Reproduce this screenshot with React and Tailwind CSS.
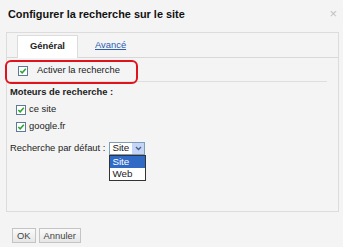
import React from 'react';

const Check = () => (
  <svg width="10" height="10" viewBox="0 0 10 10" className="shrink-0">
    <rect x="0.5" y="0.5" width="9" height="9" fill="#fff" stroke="#5f7a96" />
    <path d="M2.3 5 L4.2 6.9 L7.8 2.8" fill="none" stroke="#2fa52f" strokeWidth="1.6" />
  </svg>
);

export default function App() {
  return (
    <div className="w-[343px] h-[247px] bg-[#f4f4f4] relative text-[#222] font-['Liberation_Sans',Arial,sans-serif] text-[9.4px] overflow-hidden">
      {/* Header */}
      <div className="h-[32px] flex items-start pt-[8px] pl-[8px] pr-[6px] justify-between">
        <span className="text-[10.9px] font-bold leading-[13px] text-[#111]">Configurer la recherche sur le site</span>
        <span className="text-[13px] leading-[12px] text-[#c2c2c2]">×</span>
      </div>

      {/* Panel */}
      <div className="relative ml-[6px] w-[333px] h-[180px] border border-[#dcdcdc] bg-[#f4f4f4]">
        {/* Tabs */}
        <div className="h-[25px] flex items-end border-b border-[#d8d8d8] pl-[10px]">
          <div className="h-[23px] w-[61px] bg-white border border-b-0 border-[#dcdcdc] flex items-center justify-center font-bold -mb-px pb-px">
            Général
          </div>
          <a className="ml-[17px] h-[23px] flex items-center text-[#2a5db0] underline">Avancé</a>
        </div>

        {/* Activer */}
        <div className="h-[24px] mx-[3px] w-[317px] flex items-center gap-[9px] pl-[8px] pt-[2px] border-b border-[#dedede]">
          <Check />
          <span>Activer la recherche</span>
        </div>

        <div className="pl-[3px] pt-[3px]">
          <div className="h-[14px] flex items-center font-bold">Moteurs de recherche :</div>
          <div className="pl-[6px] pt-[2px] flex flex-col">
            <div className="h-[17px] flex items-center gap-[3px]"><Check /><span>ce site</span></div>
            <div className="h-[17px] flex items-center gap-[3px]"><Check /><span>google.fr</span></div>
          </div>
          <div className="h-[22px] mt-[2px] flex items-center">
            <span>Recherche par défaut :</span>
            <div className="relative ml-[4px]">
              <div className="w-[36px] h-[13px] border border-[#7f9db9] bg-white flex items-center">
                <span className="pl-[2px] flex-1 text-[9.8px] leading-none">Site</span>
                <div className="w-[12px] h-full bg-[#c4d5f7] flex items-center justify-center">
                  <svg width="7" height="5" viewBox="0 0 7 5">
                    <path d="M1 1 L3.5 3.5 L6 1" fill="none" stroke="#4d6185" strokeWidth="1.4" />
                  </svg>
                </div>
              </div>
              <div className="absolute left-0 top-[13px] w-[37px] border border-[#333] bg-white text-[9.8px] leading-none">
                <div className="h-[12px] bg-[#316ac5] text-white pl-[2px] flex items-center">Site</div>
                <div className="h-[12px] pl-[2px] flex items-center">Web</div>
              </div>
            </div>
          </div>
        </div>
      </div>

      {/* Red highlight */}
      <div className="absolute left-[5px] top-[60px] w-[133px] h-[24px] border-2 border-[#e0121b] rounded-[6px]" />

      {/* Buttons */}
      <div className="flex gap-[3px] pl-[12px] pt-[16px]">
        <button className="h-[15px] px-[4px] border border-[#c4c4c4] bg-gradient-to-b from-[#fafafa] to-[#e6e6e6] text-[#444] leading-none">OK</button>
        <button className="h-[15px] px-[4px] border border-[#c4c4c4] bg-gradient-to-b from-[#fafafa] to-[#e6e6e6] text-[#444] leading-none">Annuler</button>
      </div>
    </div>
  );
}
